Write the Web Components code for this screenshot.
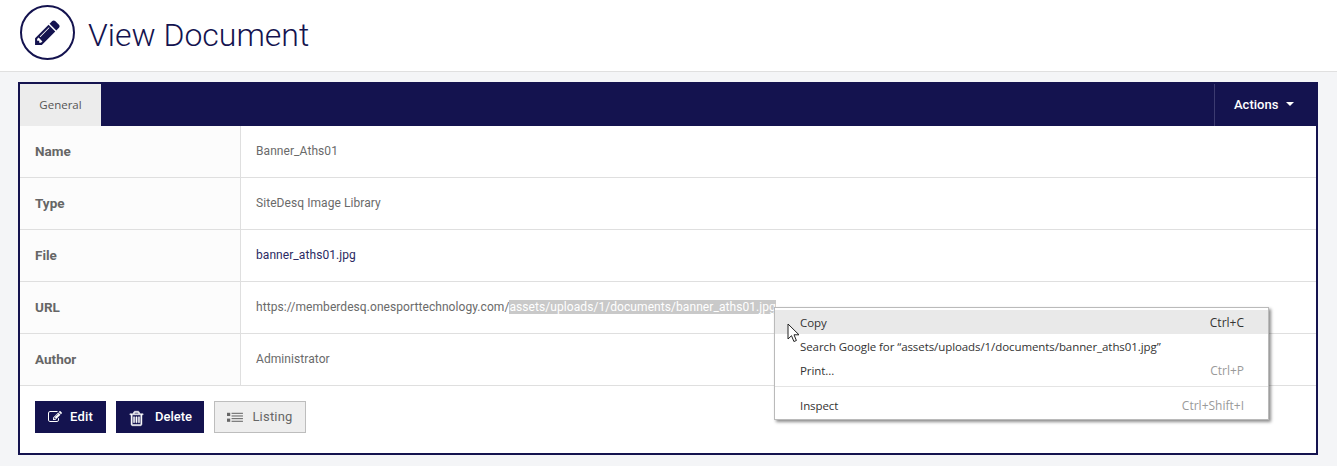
<!DOCTYPE html>
<html lang="en">
<head>
<meta charset="utf-8">
<title>View Document</title>
<style>
  html, body { margin: 0; height: 100%; }
  body { background: #f4f5f7; font-family: Roboto, "Liberation Sans", sans-serif; overflow: hidden; }
</style>
</head>
<body>
<page-header>View Document</page-header>
<doc-panel>
  <doc-row label="Name">Banner_Aths01</doc-row>
  <doc-row label="Type">SiteDesq Image Library</doc-row>
  <doc-row label="File"><span style="color:#2b2a63">banner_aths01.jpg</span></doc-row>
  <doc-row label="URL">https://memberdesq.onesporttechnology.com/<span style="background:#c9c9c9;color:#fff">assets/uploads/1/documents/banner_aths01.jpg</span></doc-row>
  <doc-row label="Author">Administrator</doc-row>
  <doc-button slot="buttons" icon="edit" width="71">Edit</doc-button>
  <doc-button slot="buttons" icon="trash" width="88">Delete</doc-button>
  <doc-button slot="buttons" icon="list" width="92" kind="plain">Listing</doc-button>
</doc-panel>
<context-menu></context-menu>

<script>
const ICONS = {
  pencil: '<path d="M491 1536l91-91-235-235-91 91v107h128v128h107zm523-928q0-22-22-22-10 0-17 7l-542 542q-7 7-7 17 0 22 22 22 10 0 17-7l542-542q7-7 7-17zm-54-192l416 416-832 832h-416v-416zm683 96q0 53-37 90l-166 166-416-416 166-165q36-38 90-38 53 0 91 38l235 234q37 39 37 91z"/>',
  edit: '<path d="M888 1184l116-116-152-152-116 116v56h96v96h56zm440-720q-16-16-33 1l-350 350q-17 17-1 33t33-1l350-350q17-17 1-33zm80 594v190q0 119-84.5 203.5t-203.5 84.5h-832q-119 0-203.5-84.5t-84.5-203.5v-832q0-119 84.5-203.5t203.5-84.5h832q63 0 117 25 15 7 18 23 3 17-9 29l-49 49q-14 14-32 8-23-6-45-6h-832q-66 0-113 47t-47 113v832q0 66 47 113t113 47h832q66 0 113-47t47-113v-126q0-13 9-22l64-64q15-15 35-7t20 29zm-96-738l288 288-672 672h-288v-288zm444 132l-92 92-288-288 92-92q28-28 68-28t68 28l152 152q28 28 28 68t-28 68z"/>',
  trash: '<path stroke="currentColor" stroke-width="45" d="M704 736v576q0 14-9 23t-23 9h-64q-14 0-23-9t-9-23v-576q0-14 9-23t23-9h64q14 0 23 9t9 23zm256 0v576q0 14-9 23t-23 9h-64q-14 0-23-9t-9-23v-576q0-14 9-23t23-9h64q14 0 23 9t9 23zm256 0v576q0 14-9 23t-23 9h-64q-14 0-23-9t-9-23v-576q0-14 9-23t23-9h64q14 0 23 9t9 23zm128 724v-948h-896v948q0 22 7 40.5t14.5 27 10.5 8.5h832q3 0 10.5-8.5t14.5-27 7-40.5zm-672-1076h448l-48-117q-7-9-17-11h-317q-10 2-17 11zm928 32v64q0 14-9 23t-23 9h-96v948q0 83-47 143.5t-113 60.5h-832q-66 0-113-58.5t-47-141.5v-952h-96q-14 0-23-9t-9-23v-64q0-14 9-23t23-9h309l70-167q15-37 54-63t79-26h320q40 0 79 26t54 63l70 167h309q14 0 23 9t9 23z"/>',
  list: '<rect x="0" y="400" width="340" height="340"/><rect x="0" y="1010" width="340" height="340"/><rect x="480" y="400" width="1200" height="110"/><rect x="480" y="680" width="1200" height="110"/><rect x="480" y="960" width="1200" height="110"/><rect x="480" y="1240" width="1200" height="110"/>'
};

class PageHeader extends HTMLElement {
  constructor() {
    super();
    this.attachShadow({ mode: "open" });
    this.shadowRoot.innerHTML = `
      <style>
        :host { display: flex; align-items: center; gap: 13px; box-sizing: border-box; height: 72px; padding: 0 0 6px 20px; background: #fff; border-bottom: 1px solid #e0e0e0; }
        .circle { box-sizing: border-box; width: 55px; height: 55px; border: 2px solid #14134f; border-radius: 50%; display: flex; align-items: center; justify-content: center; }
        svg { width: 29px; height: 29px; fill: #14134f; }
        h1 { margin: 5px 0 0; font: 300 32px Roboto, sans-serif; color: #14134f; }
      </style>
      <div class="circle"><svg viewBox="0 0 1792 1792">${ICONS.pencil}</svg></div>
      <h1><slot></slot></h1>`;
  }
}

class DocPanel extends HTMLElement {
  constructor() {
    super();
    this.attachShadow({ mode: "open" });
    this.shadowRoot.innerHTML = `
      <style>
        :host { display: block; box-sizing: border-box; width: 1300px; height: 373px; margin: 10px 0 0 18px; background: #fff; border: 2px solid #14134f; }
        .bar { display: flex; height: 42px; background: #14134f; }
        .tab { width: 81px; display: flex; align-items: center; justify-content: center; padding-bottom: 2px; box-sizing: border-box; background: #ececec; color: #555; font: 11.5px "Open Sans", sans-serif; }
        .actions { margin-left: auto; width: 102px; box-sizing: border-box; padding: 0 0 2px 19px; display: flex; align-items: center; gap: 8px; border-left: 1px solid #3c3b70; color: #fff; font: 500 13px Roboto, sans-serif; }
        .caret { width: 0; height: 0; border: 4px solid transparent; border-top-color: #fff; border-bottom: 0; }
        .buttons { display: flex; gap: 10px; padding: 15px 15px 0; }
      </style>
      <div class="bar">
        <div class="tab">General</div>
        <div class="actions">Actions<span class="caret"></span></div>
      </div>
      <slot></slot>
      <div class="buttons"><slot name="buttons"></slot></div>`;
  }
}

class DocRow extends HTMLElement {
  constructor() {
    super();
    this.attachShadow({ mode: "open" });
    this.shadowRoot.innerHTML = `
      <style>
        :host { display: grid; grid-template-columns: 221px 1fr; height: 52px; box-sizing: border-box; border-bottom: 1px solid #dfdfdf; font-family: Roboto, sans-serif; }
        .label { display: flex; align-items: center; padding: 0 0 1px 15px; background: #fcfcfc; border-right: 1px solid #dfdfdf; color: #666; font-weight: 700; font-size: 13.5px; }
        .value { display: flex; align-items: center; padding: 0 0 2px 15px; color: #6a6a6a; font-size: 12px; white-space: pre; letter-spacing: .07px; }
      </style>
      <div class="label"></div>
      <div class="value"><span><slot></slot></span></div>`;
  }
  connectedCallback() {
    this.shadowRoot.querySelector(".label").textContent = this.getAttribute("label");
  }
}

class DocButton extends HTMLElement {
  constructor() {
    super();
    this.attachShadow({ mode: "open" });
  }
  connectedCallback() {
    const plain = this.getAttribute("kind") === "plain";
    const icon = this.getAttribute("icon");
    const size = icon === "trash" ? 17 : icon === "list" ? 17 : 14;
    this.shadowRoot.innerHTML = `
      <style>
        :host { display: flex; align-items: center; justify-content: center; gap: ${icon === "trash" ? 10 : 8}px; box-sizing: border-box; height: 32px; width: ${this.getAttribute("width")}px;
          font: ${plain ? 400 : 500} 13px Roboto, sans-serif; letter-spacing: ${icon === "trash" ? 0 : .2}px; padding-bottom: 1px;
          background: ${plain ? "#eee" : "#14134f"}; color: ${plain ? "#666" : "#fff"}; border: ${plain ? "1px solid #bdbdbd" : "0"}; }
        svg { width: ${size}px; height: ${size}px; fill: currentColor; flex: none; margin-top: ${icon === "trash" ? 3 : 1}px; }
      </style>
      <svg viewBox="0 0 1792 1792">${ICONS[icon]}</svg><slot></slot>`;
  }
}

class ContextMenu extends HTMLElement {
  constructor() {
    super();
    this.attachShadow({ mode: "open" });
    this.shadowRoot.innerHTML = `
      <style>
        :host { position: absolute; left: 774px; top: 307px; width: 495px; height: 113px; box-sizing: border-box; padding-top: 2px; background: #fff; border: 1px solid #bababa; box-shadow: 2px 2px 3px rgba(0,0,0,.45); font: 11.5px "Open Sans", sans-serif; letter-spacing: -.08px; color: #333; }
        .item { display: flex; justify-content: space-between; align-items: center; height: 24px; padding: 0 24px 0 25px; white-space: pre; }
        .item.on { background: #e9e9e9; }
        .key { color: #9a9a9a; font-size: 12px; letter-spacing: 0; }
        .on .key { color: #333; }
        hr { margin: 4px 0 6px; border: 0; border-top: 1px solid #e4e4e4; }
        svg { position: absolute; left: 12px; top: 15px; width: 13px; height: 20px; }
      </style>
      <div class="item on"><span>Copy</span><span class="key">Ctrl+C</span></div>
      <div class="item"><span>Search Google for “assets/uploads/1/documents/banner_aths01.jpg”</span></div>
      <div class="item"><span>Print...</span><span class="key">Ctrl+P</span></div>
      <hr>
      <div class="item"><span>Inspect</span><span class="key">Ctrl+Shift+I</span></div>
      <svg viewBox="0 0 13 20"><path d="M1 1v15l3.5-3.3 2.4 5.8 2.5-1-2.4-5.7H12z" fill="#fff" stroke="#222" stroke-width="1"/></svg>`;
  }
}

customElements.define("page-header", PageHeader);
customElements.define("doc-panel", DocPanel);
customElements.define("doc-row", DocRow);
customElements.define("doc-button", DocButton);
customElements.define("context-menu", ContextMenu);
</script>
</body>
</html>
